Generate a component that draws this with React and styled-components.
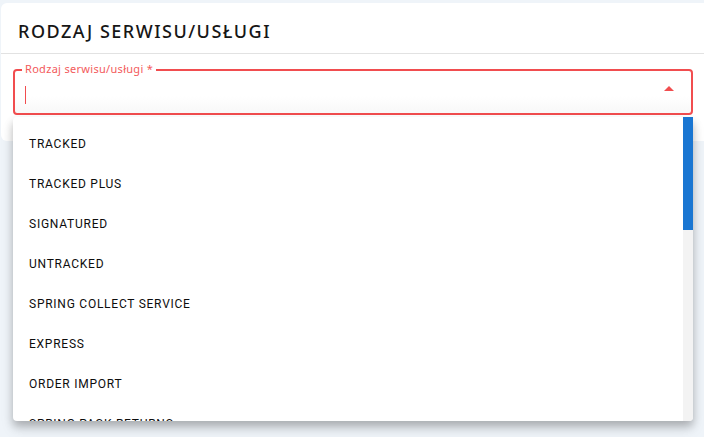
import React from 'react'
import styled, { createGlobalStyle } from 'styled-components'

const GlobalStyle = createGlobalStyle`
  html, body {
    margin: 0;
    padding: 0;
    background: #eff4f9;
    font-family: Roboto, "Noto Sans", "Liberation Sans", sans-serif;
  }
`

const Page = styled.div`
  position: relative;
  width: 704px;
  height: 437px;
  overflow: hidden;
  padding-top: 3px;
  box-sizing: border-box;
`

const Card = styled.div`
  margin-left: 1px;
  background: #fff;
  border-radius: 6px 0 0 6px;
  height: 138px;
`

const CardHeader = styled.div`
  height: 51px;
  display: flex;
  align-items: center;
  padding: 0 17px;
  border-bottom: 1px solid #e2e2e2;
  box-sizing: border-box;
`

const Title = styled.h2`
  margin: 0;
  padding-top: 6px;
  font-family: "Noto Sans", sans-serif;
  font-size: 18px;
  font-weight: 500;
  letter-spacing: 1.5px;
  color: #161616;
`

const FieldWrap = styled.div`
  padding: 15px 11px 0 12px;
`

const Field = styled.div`
  position: relative;
  height: 46px;
  box-sizing: border-box;
  border: 2px solid #f14d4f;
  border-radius: 4px;
  padding: 0 10px;
  display: flex;
  align-items: center;
  background: linear-gradient(#fff 60%, #f8f8f8);
`

const Label = styled.label`
  position: absolute;
  top: -9px;
  left: 7px;
  padding: 0 3px;
  background: #fff;
  font-family: "Noto Sans", sans-serif;
  font-size: 11px;
  line-height: 14px;
  color: #f35a5c;
  letter-spacing: 0.3px;
`

const Caret = styled.span`
  width: 1px;
  height: 18px;
  margin-top: 6px;
  background: #f14d4f;
`

const Arrow = styled.svg`
  margin-left: auto;
  margin-right: 0;
  margin-top: -6px;
`

const Menu = styled.div`
  position: absolute;
  top: 117px;
  left: 13px;
  width: 680px;
  height: 304px;
  display: flex;
  background: #fff;
  border-radius: 4px 0 4px 4px;
  overflow: hidden;
  box-shadow: 0 5px 8px rgba(0, 0, 0, 0.22), 0 8px 14px rgba(0, 0, 0, 0.1);
`

const List = styled.ul`
  flex: 1;
  margin: 0;
  padding: 7px 0;
  list-style: none;
  overflow: hidden;
`

const Item = styled.li`
  height: 40px;
  display: flex;
  align-items: center;
  padding-left: 16px;
  font-size: 12px;
  font-weight: 400;
  letter-spacing: 0.75px;
  color: #0d0d0d;
`

const ScrollTrack = styled.div`
  width: 10px;
  background: #f3f3f3;
`

const ScrollThumb = styled.div`
  height: 113px;
  background: #1976d2;
`

const options = [
  'TRACKED',
  'TRACKED PLUS',
  'SIGNATURED',
  'UNTRACKED',
  'SPRING COLLECT SERVICE',
  'EXPRESS',
  'ORDER IMPORT',
  'SPRING PACK RETURNS'
]

export default function App() {
  return (
    <>
      <GlobalStyle />
      <Page>
        <Card>
          <CardHeader>
            <Title>RODZAJ SERWISU/USŁUGI</Title>
          </CardHeader>
          <FieldWrap>
            <Field>
              <Label>Rodzaj serwisu/usługi *</Label>
              <Caret />
              <Arrow width="24" height="24" viewBox="0 0 24 24">
                <path d="M7 14l5-5 5 5z" fill="#f14d4f" />
              </Arrow>
            </Field>
          </FieldWrap>
        </Card>
        <Menu>
          <List>
            {options.map((o, i) => (
              <Item key={i}>{o}</Item>
            ))}
          </List>
          <ScrollTrack>
            <ScrollThumb />
          </ScrollTrack>
        </Menu>
      </Page>
    </>
  )
}
